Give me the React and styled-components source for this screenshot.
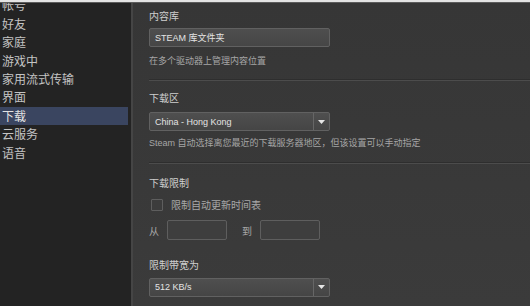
import React from "react";
import styled, { createGlobalStyle } from "styled-components";

const Global = createGlobalStyle`
  html, body { margin: 0; padding: 0; background: #373737; }
  body { font-family: "Liberation Sans", "Noto Sans CJK SC", sans-serif; }
  * { box-sizing: border-box; }
`;

const Window = styled.div`
  width: 530px;
  height: 306px;
  display: flex;
  flex-direction: column;
  overflow: hidden;
  background: #373737;
`;

const TopStrip = styled.div`
  height: 3px;
  flex: none;
  background: #e4e4e4;
  border-bottom: 1px solid #5c5c5c;
`;

const Main = styled.div`
  flex: 1;
  min-height: 0;
  display: flex;
`;

const Sidebar = styled.nav`
  width: 133px;
  flex: none;
  background: #232323;
  border-right: 2px solid #454545;
  padding-right: 3px;
  overflow: hidden;
`;

const NavList = styled.div`
  margin-top: -6.6px;
  display: flex;
  flex-direction: column;
`;

const NavItem = styled.div`
  height: 18.4px;
  line-height: 18.4px;
  padding-left: 2px;
  font-family: "Noto Sans CJK SC", sans-serif;
  font-size: 12px;
  color: ${(p) => (p.$active ? "#e2e2e2" : "#c4c4c4")};
  background: ${(p) => (p.$active ? "#3a4560" : "transparent")};
  white-space: nowrap;
`;

const Content = styled.main`
  flex: 1;
  min-width: 0;
  padding: 6.5px 0 0 16px;
  background: linear-gradient(#363636, #3b3b3b);
  display: flex;
  flex-direction: column;
`;

const Label = styled.div`
  font-family: "Noto Sans CJK SC", sans-serif;
  font-size: 10px;
  line-height: 12px;
  color: #cfcfcf;
  margin-top: ${(p) => p.$mt || 0}px;
`;

const Desc = styled.div`
  font-family: "Liberation Sans", "Noto Sans CJK SC", sans-serif;
  font-size: 9px;
  line-height: 11px;
  color: #a6a6a6;
  margin-top: ${(p) => p.$mt || 0}px;
  white-space: nowrap;
`;

const Divider = styled.div`
  height: 2px;
  margin-top: ${(p) => p.$mt || 0}px;
  border-top: 1px solid #2e2e2e;
  border-bottom: 1px solid #4c4c4c;
`;

const TextBox = styled.div`
  width: 181px;
  height: 19px;
  margin-top: ${(p) => p.$mt || 0}px;
  border: 1px solid #616161;
  border-radius: 2px;
  background: linear-gradient(#4e4e4e, #464646);
  display: flex;
  align-items: center;
  padding-left: 5px;
  font-size: 9px;
  color: #e4e4e4;
`;

const Select = styled.div`
  width: 181px;
  height: 19px;
  margin-top: ${(p) => p.$mt || 0}px;
  border: 1px solid #616161;
  border-radius: 2px;
  background: linear-gradient(#4f4f4f, #454545);
  display: flex;
  align-items: stretch;
  font-size: 9px;
  color: #e4e4e4;
`;

const SelectValue = styled.div`
  flex: 1;
  display: flex;
  align-items: center;
  padding-left: 5px;
`;

const SelectArrow = styled.div`
  width: 16px;
  border-left: 1px solid #666;
  display: flex;
  align-items: center;
  justify-content: center;
`;

const Row = styled.div`
  display: flex;
  align-items: center;
  margin-top: ${(p) => p.$mt || 0}px;
`;

const Check = styled.div`
  width: 12px;
  height: 12px;
  margin-left: 2px;
  border: 1px solid #5e5e5e;
  border-radius: 1px;
  background: #3c3c3c;
`;

const CheckLabel = styled.span`
  margin-left: 8px;
  font-family: "Noto Sans CJK SC", sans-serif;
  font-size: 10px;
  color: #a8a8a8;
`;

const RangeText = styled.span`
  font-family: "Noto Sans CJK SC", sans-serif;
  font-size: 10px;
  color: #a8a8a8;
  margin-left: ${(p) => p.$ml || 0}px;
  margin-right: ${(p) => p.$mr || 0}px;
`;

const TimeBox = styled.div`
  width: 60px;
  height: 20px;
  border: 1px solid #5e5e5e;
  border-radius: 2px;
  background: #3e3e3e;
`;

const Arrow = () => (
  <svg width="7" height="4" viewBox="0 0 7 4">
    <path d="M0 0 L7 0 L3.5 4 Z" fill="#e6e6e6" />
  </svg>
);

const nav = ["帐号", "好友", "家庭", "游戏中", "家用流式传输", "界面", "下载", "云服务", "语音"];

export default function App() {
  return (
    <>
      <Global />
      <Window>
        <TopStrip />
        <Main>
          <Sidebar>
            <NavList>
              {nav.map((n) => (
                <NavItem key={n} $active={n === "下载"}>
                  {n}
                </NavItem>
              ))}
            </NavList>
          </Sidebar>
          <Content>
            <Label>内容库</Label>
            <TextBox $mt={6.5}>STEAM 库文件夹</TextBox>
            <Desc $mt={8.5}>在多个驱动器上管理内容位置</Desc>
            <Divider $mt={12.5} />
            <Label $mt={11}>下载区</Label>
            <Select $mt={8}>
              <SelectValue>China - Hong Kong</SelectValue>
              <SelectArrow>
                <Arrow />
              </SelectArrow>
            </Select>
            <Desc $mt={6.5}>Steam 自动选择离您最近的下载服务器地区，但该设置可以手动指定</Desc>
            <Divider $mt={13.5} />
            <Label $mt={13}>下载限制</Label>
            <Row $mt={8}>
              <Check />
              <CheckLabel>限制自动更新时间表</CheckLabel>
            </Row>
            <Row $mt={8}>
              <RangeText $mr={8}>从</RangeText>
              <TimeBox />
              <RangeText $ml={15} $mr={8}>到</RangeText>
              <TimeBox />
            </Row>
            <Label $mt={19}>限制带宽为</Label>
            <Select $mt={6.5}>
              <SelectValue>512 KB/s</SelectValue>
              <SelectArrow>
                <Arrow />
              </SelectArrow>
            </Select>
          </Content>
        </Main>
      </Window>
    </>
  );
}
